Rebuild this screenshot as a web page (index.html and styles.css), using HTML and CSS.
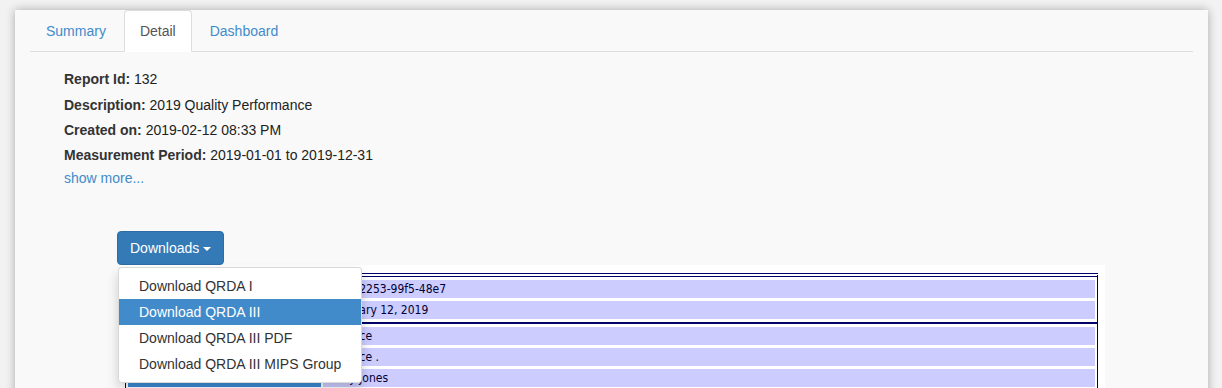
FILE: index.html
```html
<!DOCTYPE html>
<html lang="en">
<head>
    <meta charset="UTF-8">
    <title>Report Detail</title>
    <link rel="stylesheet" href="styles.css">
</head>
<body>
    <div class="panel">
        <!-- tabs -->
        <ul class="nav-tabs">
            <li><a href="#">Summary</a></li>
            <li class="active"><a href="#">Detail</a></li>
            <li><a href="#">Dashboard</a></li>
        </ul>

        <div class="tab-content">
            <!-- report info -->
            <div class="report-info">
                <p><strong>Report Id:</strong> 132</p>
                <p><strong>Description:</strong> 2019 Quality Performance</p>
                <p><strong>Created on:</strong> 2019-02-12 08:33 PM</p>
                <p><strong>Measurement Period:</strong> 2019-01-01 to 2019-12-31</p>
                <a class="show-more" href="#">show more...</a>
            </div>

            <!-- downloads -->
            <div class="downloads">
                <div class="dropdown">
                    <button class="btn btn-primary">Downloads <span class="caret"></span></button>
                    <ul class="dropdown-menu">
                        <li><a href="#">Download QRDA I</a></li>
                        <li class="active"><a href="#">Download QRDA III</a></li>
                        <li><a href="#">Download QRDA III PDF</a></li>
                        <li><a href="#">Download QRDA III MIPS Group</a></li>
                    </ul>
                </div>

                <div class="report-frame">
                    <table class="doc-table doc-header">
                        <tr><td class="lbl"></td><td>c41e-2253-99f5-48e7</td></tr>
                        <tr><td class="lbl"></td><td>February 12, 2019</td></tr>
                    </table>
                    <table class="doc-table">
                        <tr><td class="lbl"></td><td>Practice</td></tr>
                        <tr><td class="lbl"></td><td>Practice .</td></tr>
                        <tr><td class="lbl"></td><td>Mary Jones</td></tr>
                    </table>
                </div>
            </div>
        </div>
    </div>
</body>
</html>
```

FILE: styles.css
```css
html, body {
    margin: 0;
    padding: 0;
    height: 388px;
    overflow: hidden;
}

body {
    background: #f2f2f2;
    color: #333;
    font-family: 'Liberation Sans', Arial, sans-serif;
    font-size: 14px;
    line-height: 20px;
}

a {
    color: #428bca;
    text-decoration: none;
}

.panel {
    margin: 10px 14px 0 15px;
    padding: 0 15px;
    height: 400px;
    background: #f9f9f9;
    box-shadow: 0 0 9px rgba(0, 0, 0, 0.3);
}

/* tabs */
.nav-tabs {
    display: flex;
    margin: 0;
    padding: 0;
    list-style: none;
    border-bottom: 1px solid #ddd;
}

.nav-tabs li {
    margin-right: 2px;
    margin-bottom: -1px;
}

.nav-tabs a {
    display: block;
    padding: 10px 15px;
    border: 1px solid transparent;
    border-radius: 4px 4px 0 0;
}

.nav-tabs .active a {
    color: #555;
    background: #fff;
    border-color: #ddd #ddd transparent;
}

/* report info */
.report-info {
    margin: 17px 0 0 34px;
}

.report-info p {
    margin: 0 0 5px;
    color: #222;
}

.report-info p:first-child {
    margin-bottom: 6px;
}

.report-info strong {
    color: #333;
}

.show-more {
    display: block;
    margin-top: -2px;
}

/* downloads */
.downloads {
    margin: 43px 0 0 87px;
}

.dropdown {
    position: relative;
}

.btn {
    padding: 6px 12px 6px 12px;
    font-family: inherit;
    font-size: 14px;
    line-height: 20px;
    border: 1px solid transparent;
    border-radius: 4px;
    cursor: pointer;
}

.btn-primary {
    color: #fff;
    background: #337ab7;
    border-color: #2e6da4;
}

.caret {
    display: inline-block;
    width: 0;
    height: 0;
    margin-left: 0;
    vertical-align: middle;
    border-top: 4px solid;
    border-left: 4px solid transparent;
    border-right: 4px solid transparent;
}

.dropdown-menu {
    position: absolute;
    top: 100%;
    left: 1px;
    z-index: 10;
    margin: 2px 0 0;
    padding: 5px 0;
    list-style: none;
    background: #fff;
    border: 1px solid rgba(0, 0, 0, 0.15);
    border-radius: 4px;
    box-shadow: 0 6px 12px rgba(0, 0, 0, 0.175);
}

.dropdown-menu a {
    display: block;
    padding: 3px 20px;
    color: #333;
    white-space: nowrap;
}

.dropdown-menu .active a {
    color: #fff;
    background: #428bca;
}

/* embedded report */
.report-frame {
    margin-left: 3px;
    padding: 8px 0 40px 5px;
    width: 980px;
    background: #fff;
}

.doc-table {
    width: 973px;
    border: 1px solid #000066;
    border-collapse: separate;
    border-spacing: 2px 3px;
    font-family: 'DejaVu Sans Condensed', 'DejaVu Sans', sans-serif;
    font-size: 12px;
    line-height: 18px;
    color: #000033;
}

.doc-header {
    border-top: 4px double #000066;
}

.doc-table td {
    height: 18px;
    padding: 0 6px;
    background: #ccccff;
}

.doc-table .lbl {
    width: 181px;
    background: #3b8bd6;
}
```
